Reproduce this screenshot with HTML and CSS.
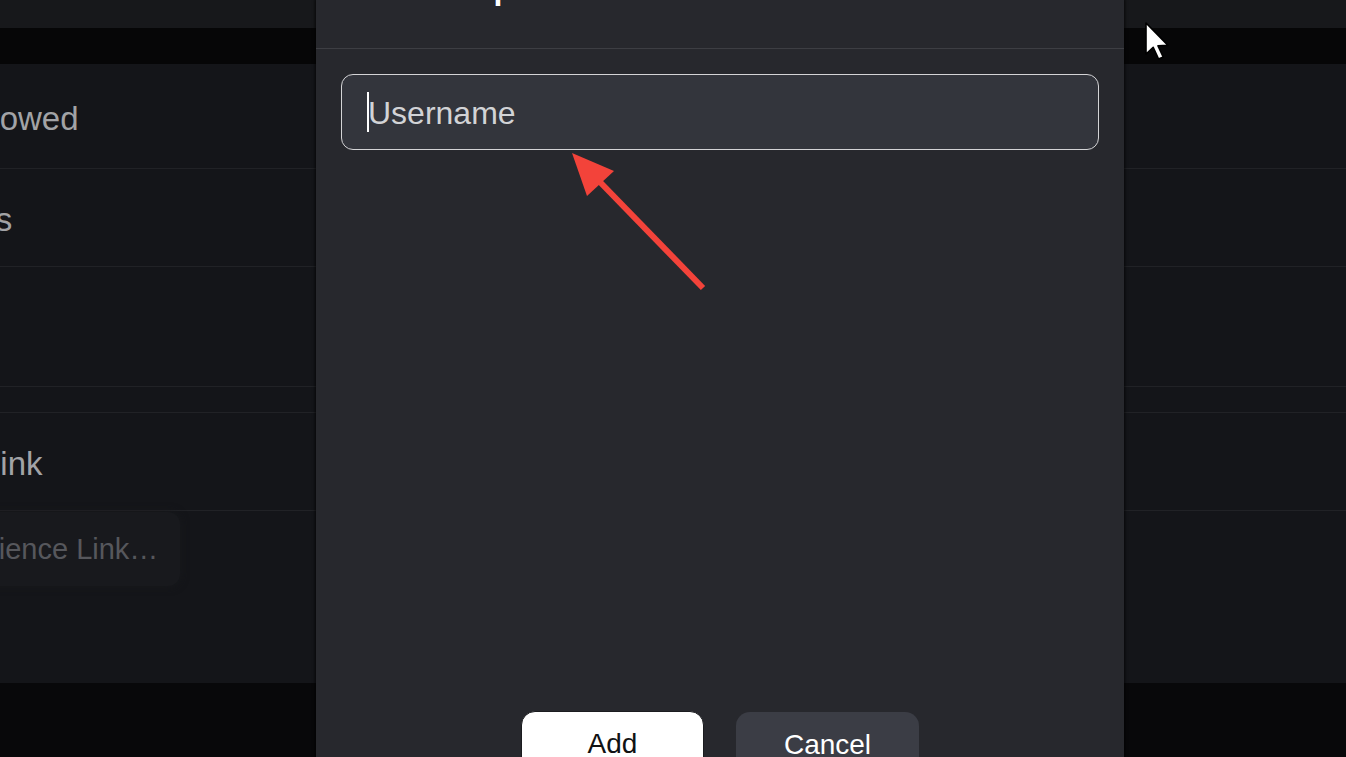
FILE: index.html
```html
<!DOCTYPE html>
<html lang="en">
<head>
<meta charset="utf-8">
<title>Add Collaborator</title>
<link rel="stylesheet" href="styles.css">
</head>
<body>
<div class="page">
  <div class="topbar"></div>
  <div class="band"></div>
  <div class="rows">
    <div class="row row-a"><span class="lbl lbl-allowed">Allowed</span></div>
    <div class="row row-b"><span class="lbl lbl-settings">Settings</span></div>
    <div class="row row-c"></div>
    <div class="row row-gap"></div>
    <div class="row row-b"><span class="lbl lbl-link">Link</span></div>
    <div class="field-area">
      <div class="field">Experience Link…</div>
    </div>
  </div>
  <div class="footer"></div>
</div>

<div class="modal">
  <div class="modal-header">
    <h2 class="modal-title">Add Groups</h2>
  </div>
  <div class="modal-body">
    <div class="input">
      <span class="caret"></span>
      <span class="placeholder">Username</span>
    </div>
  </div>
  <div class="modal-footer">
    <button class="btn btn-primary">Add</button>
    <button class="btn btn-secondary">Cancel</button>
  </div>
</div>

<svg class="annotation" width="1346" height="757" viewBox="0 0 1346 757">
  <line x1="703" y1="288" x2="598" y2="180" stroke="#f3433a" stroke-width="6"/>
  <polygon points="572,153 587,196 614,171" fill="#f3433a"/>
</svg>

<svg class="pointer" width="28" height="40" viewBox="0 0 14 20">
  <path d="M1 1 L1 16.5 L4.6 13.2 L7.3 19 L9.6 18 L7 12.4 L12 12.2 Z" fill="#ffffff" stroke="#000000" stroke-width="0.8" stroke-linejoin="round"/>
</svg>
</body>
</html>
```

FILE: styles.css
```css
* { box-sizing: border-box; }

html, body {
  margin: 0;
  padding: 0;
}

body {
  width: 1346px;
  height: 757px;
  overflow: hidden;
  position: relative;
  background: #141519;
  font-family: "Liberation Sans", Arial, sans-serif;
}

.page {
  display: flex;
  flex-direction: column;
  height: 757px;
  overflow: hidden;
}

.topbar {
  height: 28px;
  background: #17181b;
  flex: none;
}

.band {
  height: 36px;
  background: #060607;
  flex: none;
}

.rows {
  display: flex;
  flex-direction: column;
  flex: none;
}

.row {
  border-bottom: 1px solid #212226;
  display: flex;
  align-items: center;
  flex: none;
}

.row-a { height: 105px; }
.row-b { height: 98px; }
.row-c { height: 120px; }
.row-gap { height: 26px; }

.lbl {
  font-size: 33px;
  color: #a2a3a6;
  white-space: nowrap;
  line-height: 1;
  padding-top: 4px;
}

.lbl-allowed { margin-left: -37px; }
.lbl-settings { margin-left: -107px; }
.lbl-link { margin-left: -18px; }

.field-area {
  height: 172px;
  padding-top: 1px;
  flex: none;
}

.field {
  width: 286px;
  height: 74px;
  margin-left: -106px;
  padding-left: 29px;
  display: flex;
  align-items: center;
  background: #18191d;
  border-radius: 12px;
  font-size: 29px;
  color: #56575c;
  white-space: nowrap;
  box-shadow: 0 0 8px rgba(24, 25, 29, 0.9);
}

.footer {
  flex: 1;
  background: #08080a;
}

/* Modal */
.modal {
  position: absolute;
  left: 316px;
  top: 0;
  width: 808px;
  height: 800px;
  background: #27282d;
  display: flex;
  flex-direction: column;
  box-shadow: 0 0 3px 1px rgba(0, 0, 0, 0.7);
}

.modal-header {
  height: 49px;
  border-bottom: 1px solid #3d3e43;
  display: flex;
  align-items: flex-end;
  padding: 0 30px;
  flex: none;
}

.modal-title {
  margin: 0 0 44px 0;
  font-size: 32px;
  line-height: 32px;
  font-weight: 700;
  color: #ffffff;
  white-space: nowrap;
}

.modal-body {
  height: 662px;
  padding: 25px 25px 0;
  flex: none;
}

.input {
  height: 76px;
  border: 1.5px solid #d4d4d6;
  border-radius: 12px;
  background: #33353c;
  display: flex;
  align-items: center;
  padding-left: 25px;
}

.caret {
  width: 2px;
  height: 40px;
  background: #ffffff;
  flex: none;
}

.placeholder {
  font-size: 32px;
  color: #d2d3d6;
  margin-left: -1px;
  line-height: 1;
  padding-top: 2px;
}

.modal-footer {
  display: flex;
  justify-content: center;
  gap: 32px;
  flex: none;
}

.btn {
  width: 183px;
  height: 66px;
  border-radius: 14px;
  font-family: "Liberation Sans", Arial, sans-serif;
  font-size: 28px;
  border: none;
  padding: 0;
}

.btn-primary {
  background: #ffffff;
  color: #111214;
  border: 1px solid #1b1c1f;
}

.btn-secondary {
  background: #3b3d45;
  color: #ffffff;
  margin-top: 1px;
}

.annotation {
  position: absolute;
  left: 0;
  top: 0;
  pointer-events: none;
}

.pointer {
  position: absolute;
  left: 1144px;
  top: 21px;
  pointer-events: none;
}
```
